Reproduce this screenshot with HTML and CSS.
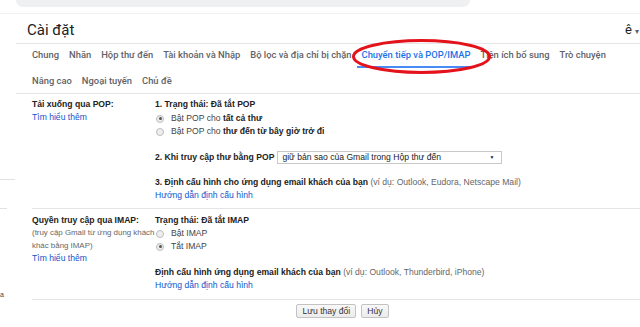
FILE: index.html
```html
<!DOCTYPE html>
<html lang="vi">
<head>
<meta charset="utf-8">
<title>Cài đặt</title>
<link rel="stylesheet" href="styles.css">
</head>
<body>
<div class="topbar"><div class="search"></div></div>
<div class="page">
  <aside class="side">
    <div class="side-line side-line-a"></div>
    <div class="side-line side-line-b"></div>
    <div class="side-text">a</div>
  </aside>
  <main class="main">
    <header class="head">
      <h1 class="title">Cài đặt</h1>
      <div class="acct">ê <span class="caret">▾</span></div>
    </header>
    <nav class="tabs">
      <div class="tab-row">
        <span class="tab">Chung</span>
        <span class="tab">Nhãn</span>
        <span class="tab">Hộp thư đến</span>
        <span class="tab">Tài khoản và Nhập</span>
        <span class="tab">Bộ lọc và địa chỉ bị chặn</span>
        <span class="tab tab-active">Chuyển tiếp và POP/IMAP</span>
        <span class="tab">Tiện ích bổ sung</span>
        <span class="tab">Trò chuyện</span>
      </div>
      <div class="tab-row tab-row-2">
        <span class="tab">Nâng cao</span>
        <span class="tab">Ngoại tuyến</span>
        <span class="tab">Chủ đề</span>
      </div>
    </nav>

    <section class="setting setting-pop">
      <div class="label-col">
        <div class="label">Tải xuống qua POP:</div>
        <a class="link">Tìm hiểu thêm</a>
      </div>
      <div class="value-col">
        <div class="line strong gap-b1">1. Trạng thái: Đã tắt POP</div>
        <div class="line radio-line"><span class="radio radio-on"></span>Bật POP cho <b>tất cả thư</b></div>
        <div class="line radio-line"><span class="radio"></span>Bật POP cho <b>thư đến từ bây giờ trở đi</b></div>
        <div class="select-line">
          <span class="strong">2. Khi truy cập thư bằng POP</span>
          <div class="select"><span>giữ bản sao của Gmail trong Hộp thư đến</span><span class="sel-arrow">▼</span></div>
        </div>
        <div class="line gap-t11"><b>3. Định cấu hình cho ứng dụng email khách của bạn</b> <span class="muted">(ví dụ: Outlook, Eudora, Netscape Mail)</span></div>
        <div class="line"><a class="link">Hướng dẫn định cấu hình</a></div>
      </div>
    </section>

    <section class="setting setting-imap">
      <div class="label-col">
        <div class="label">Quyền truy cập qua IMAP:</div>
        <div class="note">(truy cập Gmail từ ứng dụng khách<br>khác bằng IMAP)</div>
        <a class="link">Tìm hiểu thêm</a>
      </div>
      <div class="value-col">
        <div class="line strong">Trạng thái: Đã tắt IMAP</div>
        <div class="line radio-line"><span class="radio"></span>Bật IMAP</div>
        <div class="line radio-line"><span class="radio radio-on"></span>Tắt IMAP</div>
        <div class="line gap-t13"><b>Định cấu hình ứng dụng email khách của bạn</b> <span class="muted">(ví dụ: Outlook, Thunderbird, iPhone)</span></div>
        <div class="line"><a class="link">Hướng dẫn định cấu hình</a></div>
      </div>
    </section>

    <div class="actions">
      <button class="btn" type="button">Lưu thay đổi</button>
      <button class="btn" type="button">Hủy</button>
    </div>
  </main>
</div>
<svg class="mark" width="640" height="327" viewBox="0 0 640 327" aria-hidden="true">
  <ellipse cx="421.5" cy="56.5" rx="68" ry="16" fill="none" stroke="#e3121b" stroke-width="3"/>
</svg>
</body>
</html>
```

FILE: styles.css
```css
html, body {
  margin: 0;
  padding: 0;
  background: #fff;
}

body {
  width: 640px;
  height: 327px;
  overflow: hidden;
  position: relative;
  font-family: "Liberation Sans", Arial, sans-serif;
  color: #222;
}

.topbar {
  height: 13px;
  border-bottom: 1px solid #f1f1f1;
  padding-left: 16px;
}

.search {
  width: 454px;
  height: 7px;
  background: #eef0f2;
  border-radius: 0 0 7px 7px;
}

.page {
  display: flex;
}

.side {
  width: 16px;
  flex: none;
  overflow: hidden;
}

.side-line {
  height: 1px;
  background: #e2e2e2;
}

.side-line-a {
  margin-top: 165px;
  width: 15px;
}

.side-line-b {
  margin-top: 28px;
  width: 7px;
}

.side-text {
  margin-top: 81px;
  margin-left: 0;
  font-size: 7px;
  line-height: 10px;
  color: #444;
}

.main {
  flex: 1;
  min-width: 0;
}

.head {
  height: 29px;
  border-bottom: 1px solid #e6e6e6;
  display: flex;
  justify-content: space-between;
  align-items: center;
}

.title {
  margin: 0;
  padding: 2px 0 0 11px;
  font-family: Roboto, "Open Sans", sans-serif;
  font-weight: 400;
  font-size: 15px;
  color: #202124;
}

.acct {
  font-family: Roboto, sans-serif;
  font-size: 13px;
  color: #202124;
  padding-top: 2px;
  margin-right: 1px;
  white-space: nowrap;
}

.caret {
  font-size: 8px;
  color: #5f6368;
}

.tabs {
  border-bottom: 1px solid #e6e6e6;
  padding-left: 11px;
}

.tab-row {
  display: flex;
  height: 24px;
}

.tab-row-2 {
  margin-top: 2px;
  height: 23px;
}

.tab {
  padding: 0 5px;
  font-family: Roboto, sans-serif;
  font-weight: 500;
  font-size: 9.4px;
  line-height: 22px;
  height: 22px;
  color: #5f6368;
  border-bottom: 2px solid transparent;
  white-space: nowrap;
}

.tab-active {
  color: #1a73e8;
  border-bottom-color: #4a8af4;
}

.setting {
  margin-left: 16px;
  border-bottom: 1px solid #e5e5e5;
  display: grid;
  grid-template-columns: 123px 1fr;
  font-size: 8.6px;
  line-height: 13px;
}

.setting-pop {
  padding: 4px 0 6px;
}

.setting-imap {
  padding: 5px 0 7px;
}

.label {
  font-weight: bold;
  color: #222;
}

.note {
  font-size: 7.9px;
  line-height: 12.5px;
  color: #666;
  white-space: nowrap;
}

.link {
  color: #15c;
  display: block;
}

.line {
  height: 13px;
  white-space: nowrap;
  color: #444;
}

.line b,
.strong {
  color: #222;
  font-weight: bold;
}

.muted {
  color: #666;
}

.gap-b1 {
  margin-bottom: 1px;
}

.gap-t11 {
  margin-top: 11px;
}

.gap-t13 {
  margin-top: 13px;
}

.radio-line {
  display: flex;
  align-items: center;
  gap: 0;
}

.radio-line b {
  margin-left: 0.28em;
}

.radio {
  width: 6px;
  height: 6px;
  border: 1px solid #bdbdbd;
  border-radius: 50%;
  background: #eeeeee;
  margin: 0 7px 0 1px;
  position: relative;
  flex: none;
}

.radio-on::after {
  content: "";
  position: absolute;
  left: 1.5px;
  top: 1.5px;
  width: 3px;
  height: 3px;
  border-radius: 50%;
  background: #555;
}

.select-line {
  margin-top: 12px;
  height: 15px;
  display: flex;
  align-items: center;
  gap: 3px;
  white-space: nowrap;
}

.select {
  width: 219px;
  height: 11px;
  border: 1px solid #c8c8c8;
  background: #fff;
  display: flex;
  justify-content: space-between;
  align-items: center;
  padding: 0 0 0 4px;
  line-height: 11px;
  color: #222;
}

.sel-arrow {
  font-size: 5px;
  padding-right: 7px;
  color: #222;
}

.actions {
  display: flex;
  justify-content: center;
  gap: 5px;
  padding-left: 29px;
  margin-top: 4px;
}

.btn {
  margin: 0;
  height: 14px;
  padding: 0 5px;
  border: 1px solid #c3c3c3;
  border-radius: 2px;
  background: linear-gradient(#f8f8f8, #ececec);
  font-family: "Liberation Sans", Arial, sans-serif;
  font-size: 8.6px;
  line-height: 12px;
  color: #333;
}

.mark {
  position: absolute;
  left: 0;
  top: 0;
  pointer-events: none;
}
```
